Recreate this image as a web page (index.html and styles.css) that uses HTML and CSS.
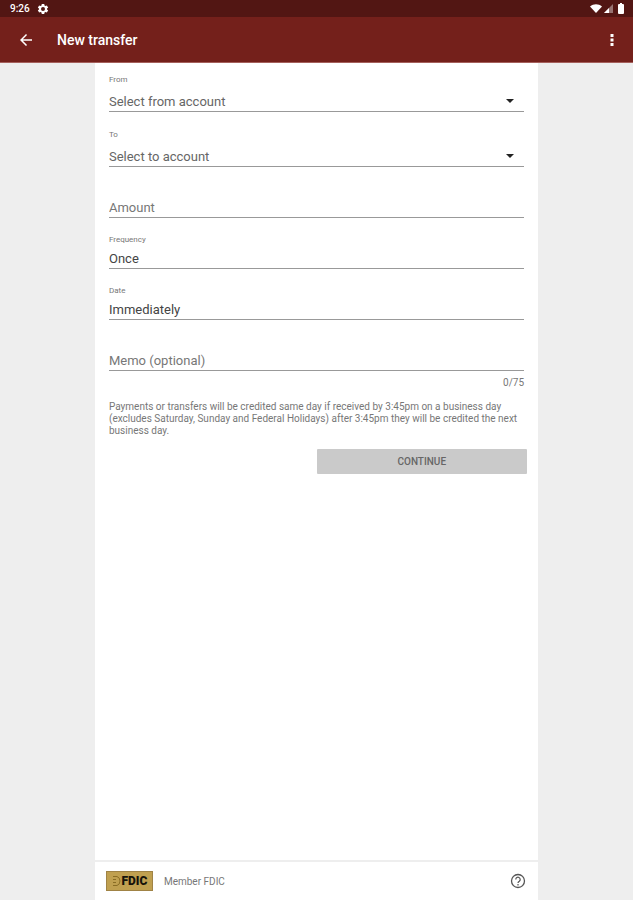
FILE: index.html
```html
<!DOCTYPE html>
<html lang="en">
<head>
    <meta charset="UTF-8">
    <meta name="viewport" content="width=device-width, initial-scale=1.0">
    <title>New transfer</title>
    <link rel="stylesheet" href="styles.css">
</head>
<body>
    <div class="status-bar">
        <span class="clock">9:26</span>
        <svg class="gear" width="12" height="12" viewBox="0 0 24 24" fill="currentColor" fill-rule="evenodd" aria-hidden="true">
            <path d="M9.5 2h5l.5 3 2 1.100 2.800-1.100 2.500 4.300-2.300 1.900v1.600l2.300 1.900-2.500 4.300-2.800-1.100-2 1.100-.5 3h-5l-.5-3-2-1.100-2.800 1.100-2.500-4.300L4 12.800v-1.600L1.700 9.300 4.200 5 7 6.100 9 5zM12 8a4 4 0 1 0 0 8 4 4 0 0 0 0-8z"/>
        </svg>
        <div class="status-icons">
            <svg width="12" height="9" viewBox="0 0 12 9" fill="currentColor" aria-hidden="true">
                <path d="M0 2.500C3.500-.5 8.500-.5 12 2.500L6 9z"/>
            </svg>
            <svg width="9" height="9" viewBox="0 0 9 9" fill="currentColor" aria-hidden="true">
                <path d="M9 0v9H0z" opacity=".4"/>
                <path d="M5 4v5H0z"/>
            </svg>
            <svg class="battery" width="6" height="11" viewBox="0 0 6 11" fill="currentColor" aria-hidden="true">
                <path d="M2 0h2v1h1q1 0 1 1v8q0 1-1 1H1q-1 0-1-1V2q0-1 1-1h1z"/>
            </svg>
        </div>
    </div>

    <header class="app-bar">
        <button class="icon-button" type="button" aria-label="Back">
            <svg width="18" height="18" viewBox="0 0 24 24" fill="currentColor">
                <path d="M20 11H7.800l5.600-5.600L12 4l-8 8 8 8 1.400-1.400L7.800 13H20z"/>
            </svg>
        </button>
        <h1>New transfer</h1>
        <button class="icon-button" type="button" aria-label="More options">
            <svg width="18" height="18" viewBox="0 0 24 24" fill="currentColor">
                <path d="M10 4h4v4h-4zM10 10h4v4h-4zM10 16h4v4h-4z"/>
            </svg>
        </button>
    </header>

    <div class="page">
        <form class="transfer-form">
            <div class="field select-field">
                <label for="from">From</label>
                <div class="select-wrap">
                    <select id="from" class="control">
                        <option>Select from account</option>
                    </select>
                    <svg class="arrow" width="8" height="4" viewBox="0 0 8 4" aria-hidden="true"><path d="M0 0h8L4 4z"/></svg>
                </div>
            </div>
            <div class="field select-field">
                <label for="to">To</label>
                <div class="select-wrap">
                    <select id="to" class="control">
                        <option>Select to account</option>
                    </select>
                    <svg class="arrow" width="8" height="4" viewBox="0 0 8 4" aria-hidden="true"><path d="M0 0h8L4 4z"/></svg>
                </div>
            </div>
            <div class="field no-label">
                <input id="amount" class="control" type="text" inputmode="decimal" placeholder="Amount" aria-label="Amount">
            </div>
            <div class="field">
                <label for="frequency">Frequency</label>
                <input id="frequency" class="control" type="text" value="Once" readonly>
            </div>
            <div class="field">
                <label for="date">Date</label>
                <input id="date" class="control" type="text" value="Immediately" readonly>
            </div>
            <div class="field no-label">
                <input id="memo" class="control" type="text" maxlength="75" placeholder="Memo (optional)" aria-label="Memo (optional)">
            </div>
            <div class="counter">0/75</div>
            <p class="note">Payments or transfers will be credited same day if received by 3:45pm on a business day (excludes Saturday, Sunday and Federal Holidays) after 3:45pm they will be credited the next business day.</p>
            <button class="continue" type="submit" disabled>CONTINUE</button>
        </form>

        <footer class="footer">
            <div class="fdic-logo">
                <svg width="9" height="12" viewBox="0 0 9 12" fill="none" stroke="#8a6d25" aria-hidden="true">
                    <path d="M1 1.500h4q3 1 3 4.500t-3 4.500H1M1 4.500h3M1 7.500h3"/>
                </svg>
                <span>FDIC</span>
            </div>
            <span class="member">Member FDIC</span>
            <button class="icon-button help" type="button" aria-label="Help">
                <svg width="16" height="16" viewBox="0 0 16 16" fill="none" stroke="currentColor">
                    <circle cx="8" cy="8" r="6.500" stroke-width="1.300"/>
                    <path d="M5.800 6.500a2.200 2.200 0 1 1 3.500 1.700Q8 9 8 10M8 11v1.400" stroke-width="1.200"/>
                </svg>
            </button>
        </footer>
    </div>
</body>
</html>
```

FILE: styles.css
```css
* {
    box-sizing: border-box;
}
body {
    margin: 0;
    min-height: 100vh;
    display: flex;
    flex-direction: column;
    font-family: Roboto, "Liberation Sans", sans-serif;
    background-color: #eeeeee;
    color: #444;
}
.status-bar {
    display: flex;
    align-items: center;
    height: 17px;
    padding: 0 9px 0 10px;
    background-color: #521613;
    color: #fff;
}
.clock {
    font-size: 10px;
    font-weight: 500;
}
.gear {
    margin-left: 7px;
}
.status-icons {
    display: flex;
    align-items: center;
    gap: 2px;
    margin-left: auto;
}
.battery {
    margin-left: 3px;
}
.app-bar {
    display: flex;
    align-items: center;
    height: 46px;
    padding: 0 12px 0 17px;
    background-color: #74201b;
    border-bottom: 1px solid #a5605c;
    color: #fff;
}
.app-bar h1 {
    flex: 1;
    margin: 0 0 0 22px;
    font-size: 14px;
    font-weight: 500;
}
.icon-button {
    display: flex;
    padding: 0;
    border: none;
    background: none;
    color: inherit;
    cursor: pointer;
}
.page {
    flex: 1;
    display: flex;
    flex-direction: column;
    width: 70%;
    margin: 0 auto;
    background-color: #fff;
}
.transfer-form {
    flex: 1;
    padding: 11px;
}
.field {
    margin: 0 3px 17px;
}
.field label {
    display: block;
    font-size: 8px;
    line-height: 10px;
    color: #777;
}
.control {
    display: block;
    width: 100%;
    height: 24px;
    margin: 0;
    padding: 3px 0 0;
    border: none;
    border-bottom: 1px solid #999;
    border-radius: 0;
    outline: none;
    background: none;
    font-family: inherit;
    font-size: 13px;
    color: #444;
}
.control::placeholder {
    color: #777;
    opacity: 1;
}
.select-field label {
    line-height: 12px;
}
.select-field .control {
    height: 26px;
    padding-top: 5px;
    appearance: none;
    color: #666;
}
.select-wrap {
    position: relative;
}
.arrow {
    position: absolute;
    top: 13px;
    right: 10px;
    fill: #222;
    pointer-events: none;
}
.no-label {
    padding-top: 10px;
}
.counter {
    margin: -11px 3px 0;
    font-size: 10px;
    line-height: 12px;
    text-align: right;
    color: #777;
}
.note {
    margin: 12px 3px;
    font-size: 10px;
    line-height: 12px;
    color: #777;
}
.continue {
    display: block;
    width: 50%;
    height: 25px;
    margin-left: auto;
    border: none;
    border-radius: 1px;
    background-color: #cacaca;
    font-family: inherit;
    font-size: 10px;
    font-weight: 500;
    color: #666;
}
.footer {
    display: flex;
    align-items: center;
    height: 40px;
    padding: 0 12px 0 11px;
    border-top: 2px solid #eeeeee;
}
.fdic-logo {
    display: flex;
    align-items: center;
    justify-content: center;
    gap: 1px;
    width: 47px;
    height: 20px;
    border: 1px solid #a08345;
    background-color: #c0a050;
    font-size: 12px;
    font-weight: 900;
    color: #17130a;
}
.member {
    margin-left: 11px;
    font-size: 10px;
    color: #777;
}
.help {
    margin-left: auto;
    color: #555;
}
```
